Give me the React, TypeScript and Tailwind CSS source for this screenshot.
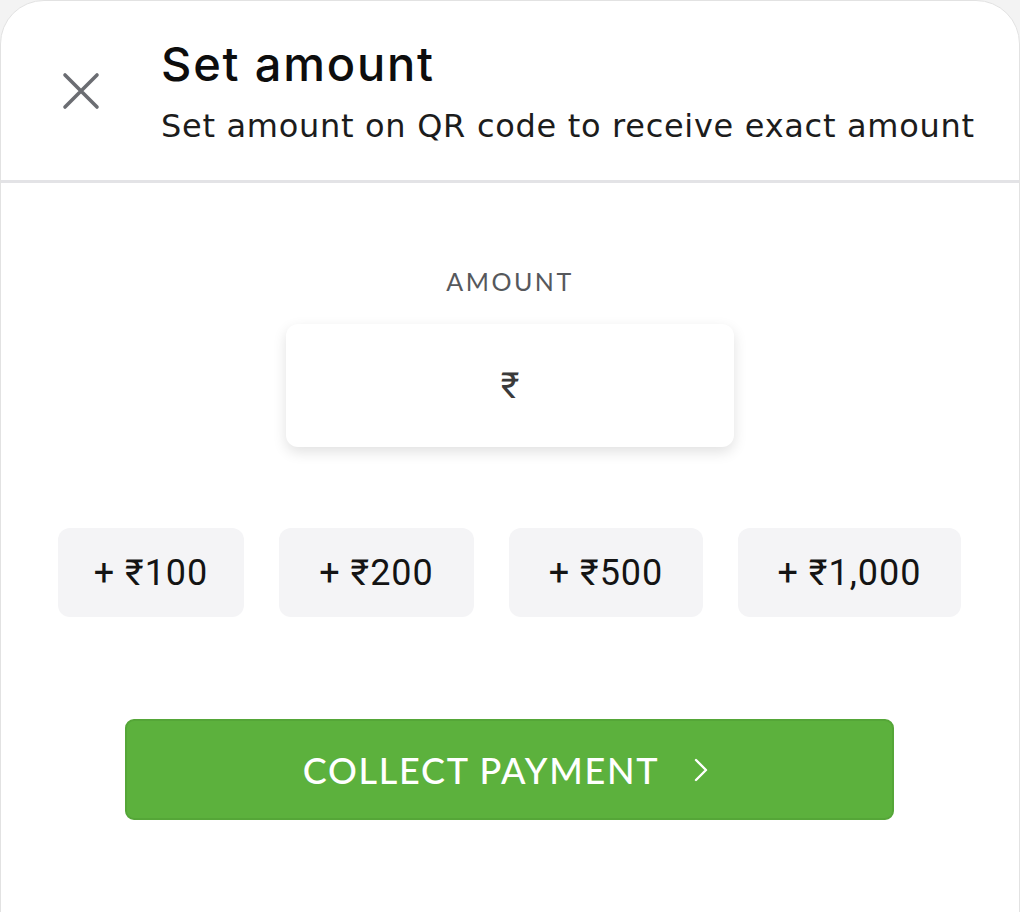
import React from "react";

export default function App() {
  const chips = [
    { label: "+ ₹100", w: "w-[186px]" },
    { label: "+ ₹200", w: "w-[195px]" },
    { label: "+ ₹500", w: "w-[194px]" },
    { label: "+ ₹1,000", w: "w-[223px]" },
  ];
  return (
    <div className="w-[1020px] h-[912px] bg-[#f3f3f3] overflow-hidden font-['Lato','Noto_Sans',sans-serif]">
      <div className="h-[940px] bg-white rounded-t-[44px] border border-[#e2e2e2] flex flex-col">
        {/* Header */}
        <div className="h-[182px] flex items-start border-b-[3px] border-[#e3e3e6]">
          <div className="w-[160px] flex justify-center pt-[71px]">
            <svg width="38" height="38" viewBox="0 0 38 38" fill="none" stroke="#6b6d72" strokeWidth="3.6" strokeLinecap="round">
              <path d="M3 3 L35 35 M35 3 L3 35" />
            </svg>
          </div>
          <div className="flex flex-col pt-[35px]">
            <div className="text-[47px] leading-[56px] font-medium text-[#0d0d0d] tracking-[1.8px] font-['Inter','Lato',sans-serif]">Set amount</div>
            <div className="text-[32px] leading-[40px] text-[#1c1c1c] mt-[14px] tracking-[0.7px] font-['DejaVu_Sans','Lato',sans-serif]">Set amount on QR code to receive exact amount</div>
          </div>
        </div>

        {/* Amount */}
        <div className="flex flex-col items-center pt-[83px]">
          <div className="text-[25px] leading-[30px] text-[#56585c] tracking-[2.5px]">AMOUNT</div>
          <div className="mt-[28px] w-[448px] h-[123px] rounded-[12px] bg-white shadow-[0_5px_14px_rgba(0,0,0,0.12)] flex items-center justify-center">
            <span className="text-[36px] text-[#3a3a3a] font-['Roboto','Noto_Sans',sans-serif]">₹</span>
          </div>
        </div>

        {/* Chips */}
        <div className="flex justify-center gap-[35px] mt-[81px] pr-[1px]">
          {chips.map((c) => (
            <div
              key={c.label}
              className={`${c.w} h-[89px] rounded-[12px] bg-[#f4f4f6] flex items-center justify-center text-[36px] tracking-[1px] text-[#141414] font-['Roboto','Noto_Sans',sans-serif]`}
            >
              {c.label}
            </div>
          ))}
        </div>

        {/* Button */}
        <div className="flex justify-center mt-[102px] pr-[1px]">
          <div className="w-[769px] h-[101px] rounded-[9px] bg-[#5cb13d] border-2 border-[#55a638] flex items-center justify-center gap-[35px] text-white pr-[8px]">
            <span className="text-[36px] font-medium tracking-[1.7px]">COLLECT PAYMENT</span>
            <svg width="14" height="24" viewBox="0 0 14 24" fill="none" stroke="white" strokeWidth="2.4" strokeLinecap="round" strokeLinejoin="round">
              <path d="M2 2 L12 12 L2 22" />
            </svg>
          </div>
        </div>
      </div>
    </div>
  );
}
